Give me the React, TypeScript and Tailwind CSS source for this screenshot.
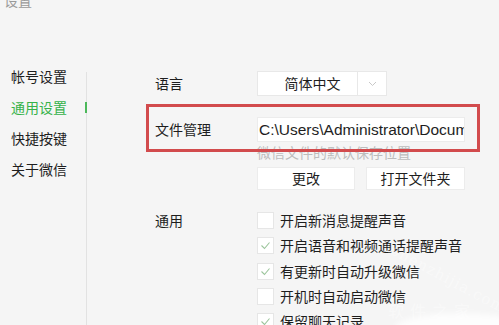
import React from "react";

const cjk = { fontFamily: '"Noto Sans CJK SC", "Noto Sans", sans-serif' };

function Check({ checked }: { checked: boolean }) {
  return (
    <div className="w-[17px] h-[17px] bg-white border border-[#e6e6e6] flex items-center justify-center">
      {checked && (
        <svg width="15" height="15" viewBox="0 0 15 15">
          <polyline points="3.5,7.5 6.5,10.5 11.5,4.5" fill="none" stroke="#9cc59c" strokeWidth="1.1" />
        </svg>
      )}
    </div>
  );
}

export default function App() {
  const side = ["帐号设置", "通用设置", "快捷按键", "关于微信"];
  const opts: [string, boolean][] = [
    ["开启新消息提醒声音", false],
    ["开启语音和视频通话提醒声音", true],
    ["有更新时自动升级微信", true],
    ["开机时自动启动微信", false],
    ["保留聊天记录", true],
  ];
  return (
    <div className="relative w-[499px] h-[325px] overflow-hidden bg-[#f5f5f5] text-[#1e1e1e]" style={cjk}>
      <div className="-mt-[7px] ml-[4px] h-[14px] text-[14px] leading-[14px] text-[#9a9a9a]">设置</div>
      <div className="flex h-[318px]">
        <div className="w-[86px] pt-[54px] flex flex-col">
          {side.map((s, i) => (
            <div
              key={s}
              className={`h-[31px] flex items-center pl-[11px] text-[14px] ${i === 1 ? "text-[#36b24a]" : "text-[#1e1e1e]"}`}
            >
              {s}
            </div>
          ))}
        </div>
        <div className="relative w-px mt-[65px] bg-[#e2e2e2]">
          <div className="absolute left-[-1px] top-[30px] w-[2px] h-[11px] bg-[#4cb85a]" />
        </div>
        <div className="flex-1 pl-[68px] pt-[64px] flex flex-col">
          <div className="flex items-center h-[25px]">
            <div className="w-[102px] text-[14px]">语言</div>
            <div className="w-[130px] h-[25px] bg-white border border-[#e8e8e8] flex">
              <div className="flex-1 flex items-center justify-center pl-[10px] text-[14px]">简体中文</div>
              <div className="w-[29px] border-l border-[#e8e8e8] flex items-center justify-center">
                <svg width="9" height="6" viewBox="0 0 9 6">
                  <polyline points="1,1 4.5,4.5 8,1" fill="none" stroke="#c8c8c8" strokeWidth="1" />
                </svg>
              </div>
            </div>
          </div>
          <div className="flex items-center h-[25px] mt-[21px]">
            <div className="w-[102px] text-[14px]">文件管理</div>
            <div className="w-[208px] h-[25px] bg-white border border-[#ececec] overflow-hidden flex items-center">
              <span
                className="whitespace-nowrap pl-[1px] text-[15.5px] text-[#1e1e1e]"
                style={{ fontFamily: '"Liberation Sans", Arial, sans-serif' }}
              >
                C:\Users\Administrator\Documents\WeChat Files
              </span>
            </div>
          </div>
          <div className="ml-[102px] h-[20px] leading-[20px] text-[14px] text-[#bdbdbd]">微信文件的默认保存位置</div>
          <div className="ml-[102px] mt-[5px] flex gap-[11px]">
            <div className="w-[98px] h-[23px] bg-white border border-[#ececec] flex items-center justify-center text-[14px]">更改</div>
            <div className="w-[99px] h-[23px] bg-white border border-[#ececec] flex items-center justify-center text-[14px]">打开文件夹</div>
          </div>
          <div className="flex mt-[18px]">
            <div className="w-[102px] h-[25px] flex items-center text-[14px]">通用</div>
            <div className="flex flex-col">
              {opts.map(([t, c]) => (
                <div key={t} className="h-[25.3px] flex items-center gap-[6px]">
                  <Check checked={c} />
                  <span className="text-[14px]">{t}</span>
                </div>
              ))}
            </div>
          </div>
        </div>
      </div>
      <div className="absolute left-[146px] top-[104px] w-[334px] h-[48px] border-[3px] border-[#d24b4d]" />
      <div className="absolute left-[385px] top-[268px] text-[15px] text-white/40 rotate-[28deg] tracking-[1px]" style={{ fontFamily: '"DejaVu Serif", serif' }}>
        shenzhijia.com
      </div>
      <div className="absolute left-[388px] top-[298px] text-[16px] text-white/40 tracking-[6px]">软件之家</div>
      <div className="absolute left-[395px] top-[313px] w-[130px] h-[30px] rounded-[50%] bg-white/80 blur-[3px]" />
    </div>
  );
}
